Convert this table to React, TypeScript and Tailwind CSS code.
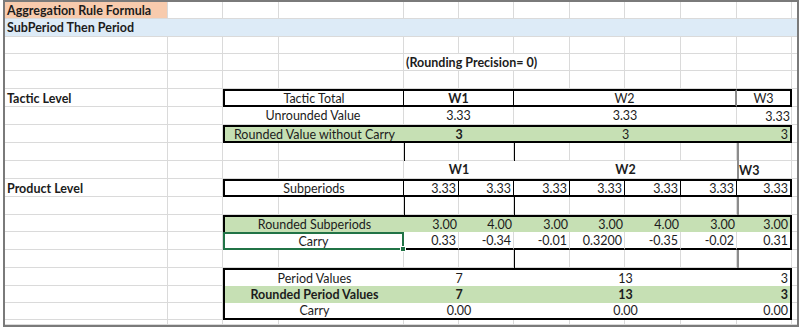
import React from 'react';

const COLS = ['col-start-1','col-start-2','col-start-3','col-start-4','col-start-5','col-start-6','col-start-7','col-start-8','col-start-9','col-start-10','col-start-11','col-start-12'];
const ROWS = ['row-start-1','row-start-2','row-start-3','row-start-4','row-start-5','row-start-6','row-start-7','row-start-8','row-start-9','row-start-10','row-start-11','row-start-12','row-start-13','row-start-14','row-start-15','row-start-16','row-start-17','row-start-18','row-start-19'];

type Cell = { cls: string; t?: string; handle?: boolean };

const GREEN = 'bg-[#c6e0b4]';

const sub = ['3.33','3.33','3.33','3.33','3.33','3.33'];
const rsub = ['3.00','4.00','3.00','3.00','4.00','3.00'];
const carry = ['0.33','-0.34','-0.01','0.3200','-0.35','-0.02'];
const six = ['col-start-5','col-start-6','col-start-7','col-start-8','col-start-9','col-start-10'];

const cells: Cell[] = [
  { cls: 'col-start-1 row-start-1 bg-[#f8cbad] justify-start font-bold border-r border-b border-[#dadada]', t: 'Aggregation Rule Formula' },
  { cls: 'col-start-1 col-span-12 row-start-2 bg-[#ddebf7] justify-start font-bold border-b border-[#dadada]', t: 'SubPeriod Then Period' },
  { cls: 'col-start-5 col-span-3 row-start-4 bg-white justify-start font-bold border-r border-b border-[#dadada]', t: '(Rounding Precision= 0)' },

  { cls: 'col-start-1 row-start-6 justify-start font-bold', t: 'Tactic Level' },
  { cls: 'col-start-3 col-span-2 row-start-6 bg-white justify-center border-y-2 border-l-2 border-r border-black', t: 'Tactic Total' },
  { cls: 'col-start-5 col-span-2 row-start-6 bg-white justify-center font-bold border-y-2 border-r border-black', t: 'W1' },
  { cls: 'col-start-7 col-span-4 row-start-6 bg-white justify-center border-y-2 border-r-2 border-black border-r-[#8c8c8c]', t: 'W2' },
  { cls: 'col-start-11 row-start-6 bg-white justify-center border-y-2 border-r-2 border-black', t: 'W3' },

  { cls: 'col-start-3 col-span-2 row-start-7 bg-white justify-center border-r border-b border-[#dadada]', t: 'Unrounded Value' },
  { cls: 'col-start-5 col-span-2 row-start-7 bg-white justify-center border-r border-b border-[#dadada]', t: '3.33' },
  { cls: 'col-start-7 col-span-4 row-start-7 bg-white justify-center border-r border-b border-[#dadada]', t: '3.33' },
  { cls: 'col-start-11 row-start-7 justify-end', t: '3.33' },

  { cls: 'col-start-3 col-span-2 row-start-8 bg-[#c6e0b4] justify-center border-y-2 border-l-2 border-black', t: 'Rounded Value without Carry' },
  { cls: 'col-start-5 col-span-2 row-start-8 bg-[#c6e0b4] justify-center font-bold border-y-2 border-black', t: '3' },
  { cls: 'col-start-7 col-span-4 row-start-8 bg-[#c6e0b4] justify-center border-y-2 border-black', t: '3' },
  { cls: 'col-start-11 row-start-8 bg-[#c6e0b4] justify-end border-y-2 border-r-2 border-black', t: '3' },

  { cls: 'col-start-5 col-span-2 row-start-10 bg-white justify-center font-bold border-b border-[#dadada]', t: 'W1' },
  { cls: 'col-start-7 col-span-4 row-start-10 bg-white justify-center font-bold border-b border-[#dadada]', t: 'W2' },
  { cls: 'col-start-11 row-start-10 justify-start font-bold', t: 'W3' },

  { cls: 'col-start-1 row-start-11 justify-start font-bold', t: 'Product Level' },
  { cls: 'col-start-3 col-span-2 row-start-11 bg-white justify-center border-y-2 border-l-2 border-r border-black', t: 'Subperiods' },
  ...six.map((c, i) => ({ cls: `${c} row-start-11 bg-white justify-end border-y-2 border-r border-black`, t: sub[i] })),
  { cls: 'col-start-11 row-start-11 bg-white justify-end border-y-2 border-r-2 border-black', t: '3.33' },

  { cls: 'col-start-3 col-span-2 row-start-13 bg-[#c6e0b4] justify-center border-t-2 border-l-2 border-black', t: 'Rounded Subperiods' },
  ...six.map((c, i) => ({ cls: `${c} row-start-13 ${GREEN} justify-end border-t-2 border-black`, t: rsub[i] })),
  { cls: 'col-start-11 row-start-13 bg-[#c6e0b4] justify-end border-t-2 border-r-2 border-black', t: '3.00' },

  { cls: 'col-start-3 col-span-2 row-start-14 bg-white justify-center border-2 border-[#217346] z-10', t: 'Carry', handle: true },
  ...six.map((c, i) => ({ cls: `${c} row-start-14 bg-white justify-end border-b-2 border-r border-b-black border-r-[#dadada]`, t: carry[i] })),
  { cls: 'col-start-11 row-start-14 bg-white justify-end border-b-2 border-r-2 border-black', t: '0.31' },

  { cls: 'col-start-3 col-span-2 row-start-16 bg-white justify-center border-t-2 border-l-2 border-black', t: 'Period Values' },
  { cls: 'col-start-5 col-span-2 row-start-16 bg-white justify-center border-t-2 border-black', t: '7' },
  { cls: 'col-start-7 col-span-4 row-start-16 bg-white justify-center border-t-2 border-black', t: '13' },
  { cls: 'col-start-11 row-start-16 bg-white justify-end border-t-2 border-r-2 border-black', t: '3' },

  { cls: 'col-start-3 col-span-2 row-start-17 bg-[#c6e0b4] justify-center font-bold border-l-2 border-black', t: 'Rounded Period Values' },
  { cls: 'col-start-5 col-span-2 row-start-17 bg-[#c6e0b4] justify-center font-bold', t: '7' },
  { cls: 'col-start-7 col-span-4 row-start-17 bg-[#c6e0b4] justify-center font-bold', t: '13' },
  { cls: 'col-start-11 row-start-17 bg-[#c6e0b4] justify-end font-bold border-r-2 border-black', t: '3' },

  { cls: 'col-start-3 col-span-2 row-start-18 bg-white justify-center border-b-2 border-l-2 border-black', t: 'Carry' },
  { cls: 'col-start-5 col-span-2 row-start-18 bg-white justify-center border-b-2 border-black', t: '0.00' },
  { cls: 'col-start-7 col-span-4 row-start-18 bg-white justify-center border-b-2 border-black', t: '0.00' },
  { cls: 'col-start-11 row-start-18 bg-white justify-end border-b-2 border-r-2 border-black', t: '0.00' },
];

export default function App() {
  const bg: React.ReactNode[] = [];
  for (let r = 0; r < 19; r++) {
    for (let c = 0; c < 12; c++) {
      bg.push(
        <div
          key={`bg-${r}-${c}`}
          className={`${ROWS[r]} ${COLS[c]} ${c === 11 ? 'border-b' : 'border-r border-b'} border-[#dadada]`}
        />
      );
    }
  }
  return (
    <div className="w-[800px] h-[330px] bg-white pl-[3px] font-[family-name:Lato,sans-serif] text-[12.5px] text-[#1c1c1c]">
      <div className="grid w-[796px] border-2 border-[#7a7a7a] grid-cols-[163px_55px_56px_125px_55px_55px_56px_55px_56px_56px_55px_5px] grid-rows-[17px_18px_17px_17px_18px_18px_18px_18px_18px_18px_18px_18px_17px_18px_18px_18px_17px_17px_5px]">
        {bg}
        {cells.map((cell, i) => (
          <div key={i} className={`relative flex items-center whitespace-nowrap px-[2px] pt-[2px] leading-none ${cell.cls}`}>
            {cell.t}
            {cell.handle && (
              <span className="absolute -right-[4px] -bottom-[4px] w-[6px] h-[6px] bg-[#217346] border border-white" />
            )}
          </div>
        ))}
        <div className="col-start-5 row-start-9 row-span-4 border-l border-black pointer-events-none" />
        <div className="col-start-7 row-start-9 row-span-10 border-l border-black pointer-events-none" />
        <div className="col-start-11 row-start-9 row-span-10 border-l-2 border-[#8c8c8c] pointer-events-none" />
      </div>
    </div>
  );
}
